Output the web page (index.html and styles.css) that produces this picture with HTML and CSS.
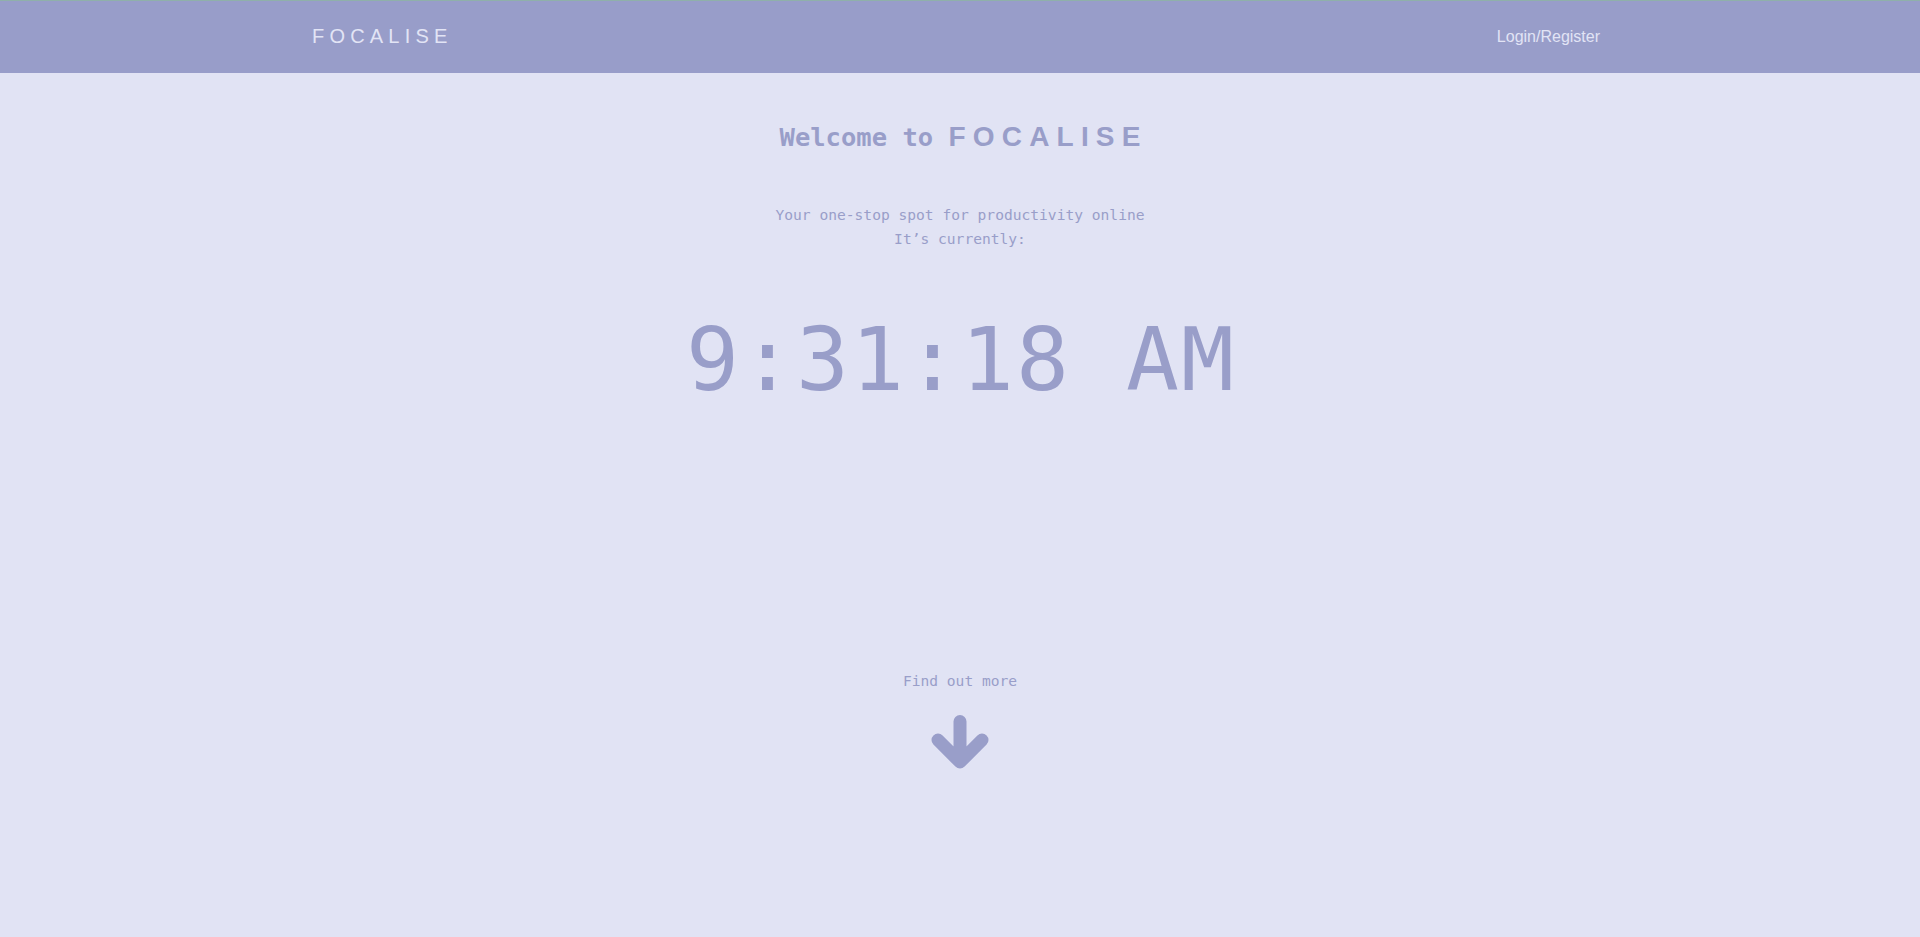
FILE: index.html
```html
<!DOCTYPE html>
<html lang="en">
<head>
<meta charset="utf-8">
<title>Focalise</title>
<link rel="stylesheet" href="styles.css">
</head>
<body>
<header class="topbar">
  <div class="topbar-inner">
    <a class="brand" href="#">FOCALISE</a>
    <a class="login" href="#">Login/Register</a>
  </div>
</header>
<main class="hero">
  <h1 class="welcome"><span class="welcome-mono">Welcome to </span><span class="welcome-brand">FOCALISE</span></h1>
  <p class="tagline">Your one-stop spot for productivity online<br>It’s currently:</p>
  <div class="clock">9:31:18 AM</div>
  <p class="more">Find out more</p>
  <svg class="arrow" width="60" height="58" viewBox="0 0 60 58" aria-hidden="true">
    <path d="M30 9.5 V50 M8 28 L30 50 L52 28" fill="none" stroke="#999ec9" stroke-width="13" stroke-linecap="round" stroke-linejoin="round"/>
  </svg>
</main>
</body>
</html>
```

FILE: styles.css
```css
html, body {
  margin: 0;
  padding: 0;
}
body {
  background: #e1e3f4;
  min-height: 937px;
  color: #999ec9;
}
.topbar {
  background: #989dc9;
  border-top: 1px solid #8fb0aa;
  height: 72px;
}
.topbar-inner {
  width: 1296px;
  margin: 0 auto;
  height: 100%;
  display: flex;
  align-items: center;
  justify-content: space-between;
}
.brand {
  font-family: "Liberation Sans", Arial, sans-serif;
  font-size: 20px;
  letter-spacing: 5.2px;
  color: #e2e4f5;
  text-decoration: none;
  line-height: 24px;
  margin-bottom: 2px;
}
.login {
  font-family: "Liberation Sans", Arial, sans-serif;
  font-size: 16px;
  color: #e2e4f5;
  text-decoration: none;
  margin-right: 8px;
  line-height: 20px;
}
.hero {
  display: flex;
  flex-direction: column;
  align-items: center;
  text-align: center;
  padding-top: 47px;
}
.welcome {
  margin: 0;
  line-height: 34px;
  font-size: 28px;
  font-weight: bold;
  white-space: pre;
}
.welcome-mono {
  font-family: "DejaVu Sans Mono", monospace;
  font-size: 25.5px;
}
.welcome-brand {
  font-family: "Liberation Sans", Arial, sans-serif;
  font-size: 28px;
  letter-spacing: 7.2px;
  margin-right: -7.2px;
}
.tagline {
  margin: 49px 0 0;
  font-family: "DejaVu Sans Mono", monospace;
  font-size: 14.6px;
  line-height: 24px;
}
.clock {
  margin-top: 59px;
  font-family: "DejaVu Sans Mono", monospace;
  font-size: 88px;
  line-height: 100px;
  letter-spacing: 2px;
  margin-right: -2px;
}
.more {
  margin: 259px 0 0;
  font-family: "DejaVu Sans Mono", monospace;
  font-size: 14.6px;
  line-height: 24px;
}
.arrow {
  display: block;
  margin-top: 19px;
}
```
